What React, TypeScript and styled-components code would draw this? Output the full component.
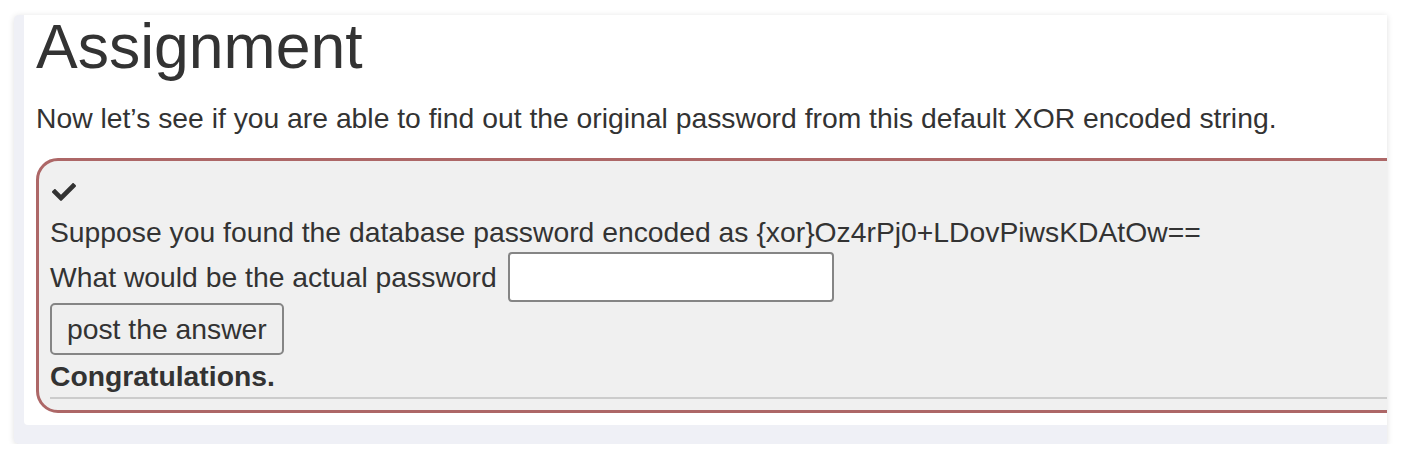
import React from 'react';
import styled, { createGlobalStyle } from 'styled-components';
import { FaCheck } from 'react-icons/fa';

const GlobalStyle = createGlobalStyle`
  body {
    margin: 0;
    background: #ffffff;
    font-family: "Liberation Sans", Arial, Helvetica, sans-serif;
    color: #333333;
  }
`;

const Panel = styled.div`
  display: flow-root;
  width: 1373px;
  margin: 15px 0 0 14px;
  padding: 0 0 19px 10px;
  box-sizing: border-box;
  background: #eff0f6;
  border-radius: 5px 0 0 5px;
  box-shadow: 0 1px 6px rgba(0, 0, 0, 0.13);
`;

const Card = styled.div`
  display: flow-root;
  background: #ffffff;
  border-radius: 0 0 0 4px;
  overflow-x: clip;
  padding: 0 0 12px 12px;
`;

const Title = styled.h1`
  margin: -4px 0 0;
  font-size: 62.5px;
  line-height: 70px;
  font-weight: 400;
`;

const Lead = styled.p`
  margin: 17px 0 20px;
  font-size: 28.3px;
  line-height: 40px;
`;

const AttackBox = styled.div`
  width: calc(100% + 40px);
  box-sizing: border-box;
  background: #f0f0f0;
  border: 3px solid #ad6767;
  border-radius: 22px;
  padding: 0 11px 11px;
  font-size: 28.3px;
  line-height: 40px;
`;

const CheckRow = styled.div`
  padding: 19px 0 8px 2px;
  color: #333333;

  svg {
    display: block;
  }
`;

const Line = styled.div`
  white-space: nowrap;
`;

const InputRow = styled.div`
  display: flex;
  align-items: center;
  white-space: nowrap;
`;

const AnswerInput = styled.input`
  width: 326px;
  height: 50px;
  box-sizing: border-box;
  margin-left: 11px;
  border: 2px solid #858585;
  border-radius: 4px;
  background: #ffffff;
  font: inherit;
`;

const SubmitButton = styled.button`
  display: block;
  height: 52px;
  margin-top: 1px;
  padding: 0 15px;
  border: 2px solid #858585;
  border-radius: 5px;
  background: #efefef;
  color: #333333;
  font-family: inherit;
  font-size: 28.3px;
`;

const Feedback = styled.div`
  margin-top: 1px;
  padding-bottom: 1px;
  font-weight: bold;
  border-bottom: 2px solid #cccccc;
`;

const App: React.FC = () => (
  <>
    <GlobalStyle />
    <Panel>
      <Card>
        <Title>Assignment</Title>
        <Lead>Now let’s see if you are able to find out the original password from this default XOR encoded string.</Lead>
        <AttackBox>
          <CheckRow>
            <FaCheck size={24} />
          </CheckRow>
          <Line>Suppose you found the database password encoded as {'{xor}'}Oz4rPj0+LDovPiwsKDAtOw==</Line>
          <InputRow>
            What would be the actual password
            <AnswerInput type="text" />
          </InputRow>
          <SubmitButton type="button">post the answer</SubmitButton>
          <Feedback>Congratulations.</Feedback>
        </AttackBox>
      </Card>
    </Panel>
  </>
);

export default App;
